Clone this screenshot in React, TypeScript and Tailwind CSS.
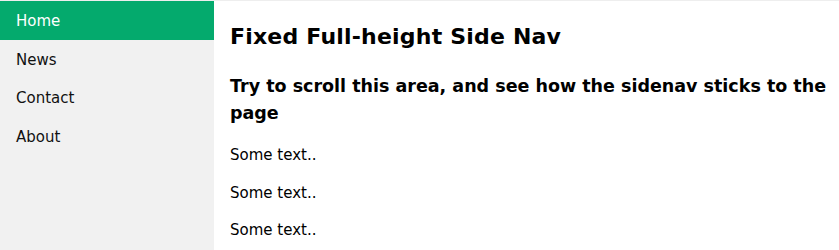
export default function App() {
  const links = ["Home", "News", "Contact", "About"];

  return (
    <div className="flex min-h-[250px] border-t border-[#eeeeee] font-['DejaVu_Sans',sans-serif] text-black">
      {/* Side nav */}
      <nav className="w-[214px] shrink-0 bg-[#f1f1f1]">
        {links.map((link, i) => (
          <a
            key={link}
            href="#"
            className={
              i === 0
                ? "flex h-[38.5px] items-center bg-[#04aa6d] px-4 pt-[2px] text-[15px] text-white"
                : "flex h-[38.5px] items-center px-4 pt-[2px] text-[15px] text-[#111111]"
            }
          >
            {link}
          </a>
        ))}
      </nav>

      {/* Content */}
      <main className="flex-1 pl-4 pr-3">
        <h2 className="mt-[23px] text-[22px] leading-[26px] font-bold tracking-[0.2px]">
          Fixed Full-height Side Nav
        </h2>
        <h3 className="mt-[23px] text-[17.5px] leading-[27px] font-bold">
          Try to scroll this area, and see how the sidenav sticks to the page
        </h3>
        <p className="mt-[18px] text-[15px] leading-[20px]">Some text..</p>
        <p className="mt-[17.5px] text-[15px] leading-[20px]">Some text..</p>
        <p className="mt-[17.5px] text-[15px] leading-[20px]">Some text..</p>
      </main>
    </div>
  );
}
